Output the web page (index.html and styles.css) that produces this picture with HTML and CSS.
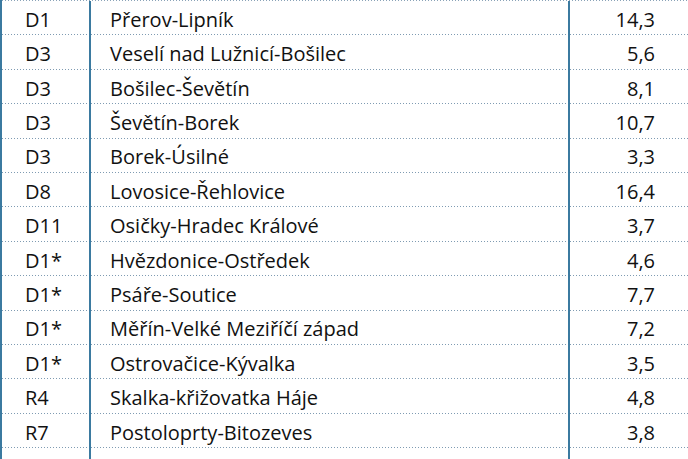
FILE: index.html
```html
<!DOCTYPE html>
<html lang="cs">
<head>
<meta charset="utf-8">
<title>Úseky dálnic</title>
<link rel="stylesheet" href="styles.css">
</head>
<body>
<div class="table">
  <div class="row"><div class="road">D1</div><div class="name">Přerov-Lipník</div><div class="km">14,3</div></div>
  <div class="row"><div class="road">D3</div><div class="name">Veselí nad Lužnicí-Bošilec</div><div class="km">5,6</div></div>
  <div class="row"><div class="road">D3</div><div class="name">Bošilec-Ševětín</div><div class="km">8,1</div></div>
  <div class="row"><div class="road">D3</div><div class="name">Ševětín-Borek</div><div class="km">10,7</div></div>
  <div class="row"><div class="road">D3</div><div class="name">Borek-Úsilné</div><div class="km">3,3</div></div>
  <div class="row"><div class="road">D8</div><div class="name">Lovosice-Řehlovice</div><div class="km">16,4</div></div>
  <div class="row"><div class="road">D11</div><div class="name">Osičky-Hradec Králové</div><div class="km">3,7</div></div>
  <div class="row"><div class="road">D1*</div><div class="name">Hvězdonice-Ostředek</div><div class="km">4,6</div></div>
  <div class="row"><div class="road">D1*</div><div class="name">Psáře-Soutice</div><div class="km">7,7</div></div>
  <div class="row"><div class="road">D1*</div><div class="name">Měřín-Velké Meziříčí západ</div><div class="km">7,2</div></div>
  <div class="row"><div class="road">D1*</div><div class="name">Ostrovačice-Kývalka</div><div class="km">3,5</div></div>
  <div class="row"><div class="road">R4</div><div class="name">Skalka-křižovatka Háje</div><div class="km">4,8</div></div>
  <div class="row"><div class="road">R7</div><div class="name">Postoloprty-Bitozeves</div><div class="km">3,8</div></div>
  <div class="row"><div class="road">D49</div><div class="name">Hulín-Fryšták</div><div class="km">16,9</div></div>
</div>
</body>
</html>
```
FILE: styles.css
```css
html, body {
  margin: 0;
  padding: 0;
  background: #ffffff;
}

body {
  width: 688px;
  height: 459px;
  overflow: hidden;
}

.table {
  font-family: "Open Sans", "Noto Sans", "DejaVu Sans", sans-serif;
  font-size: 20px;
  color: #111111;
  border-left: 2px solid #3b7aa0;
  background-image: repeating-linear-gradient(to right, #8aa3b8 0 1px, transparent 1px 3px);
  background-size: 100% 1px;
  background-repeat: no-repeat;
  padding-top: 1px;
}

.row {
  display: grid;
  grid-template-columns: 89px 479px 1fr;
  height: 34.42px;
}

.row > div {
  display: flex;
  align-items: center;
  padding-top: 2px;
  box-sizing: border-box;
  white-space: nowrap;
  background-image: repeating-linear-gradient(to right, #7f9bb2 0 1px, transparent 1px 3px);
  background-size: 100% 1px;
  background-position: left bottom;
  background-repeat: no-repeat;
}

.road {
  padding-left: 23px;
  border-right: 2px solid #3b7aa0;
}

.name {
  padding-left: 19px;
  border-right: 2px solid #3b7aa0;
}

.km {
  justify-content: flex-end;
  padding-right: 33px;
}
```
